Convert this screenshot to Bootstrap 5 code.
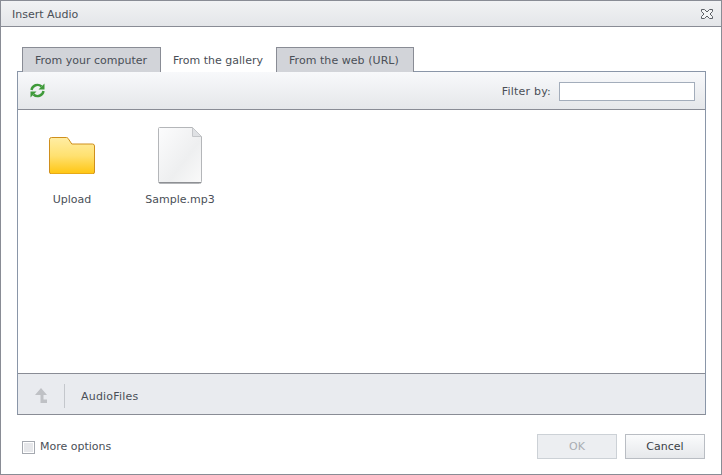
<!DOCTYPE html>
<html lang="en">
<head>
    <meta charset="UTF-8">
    <meta name="viewport" content="width=device-width, initial-scale=1.0">
    <title>Insert Audio</title>
    <link href="https://cdn.jsdelivr.net/npm/bootstrap@5.3.0/dist/css/bootstrap.min.css" rel="stylesheet">
    <style>
        html, body { height: 100%; }
        body { font-family: "DejaVu Sans", sans-serif; font-size: 11px; color: #4a4f57; background: #fff; }
        .dlg { width: 722px; height: 475px; border: 1px solid #898c95; }
        .dlg-title { height: 25px; padding: 0 8px 0 11px; color: #4a4f57; background: linear-gradient(#f1f2f4, #e4e6e9); border-bottom: 1px solid #898c95; box-sizing: content-box; }
        .title-lbl { margin-top: 3px; }
        .dlg-body { padding: 20px 16px 0 16px; }
        .tab-row { padding-left: 5px; height: 24px; position: relative; z-index: 1; }
        .tab-item { height: 25px; line-height: 26px; padding: 0 12px; background: #d2d4d9; color: #4a4f57; border: 1px solid #898c95; border-bottom: 0; }
        .tab-item.first { width: 139px; }
        .tab-item.second { width: 115px; background: #fff; border-width: 0; line-height: 28px; }
        .tab-item.third { width: 138px; letter-spacing: .05px; }
        .panel-box { width: 689px; height: 344px; border: 1px solid #8a96a8; border-bottom-color: #898c95; }
        .tool-bar { height: 38px; padding: 2px 10px 0 12px; background: linear-gradient(#f8f9fb, #e5e7ea); border-bottom: 1px solid #898c95; }
        .tool-bar > svg { margin-bottom: 2px; }
        .filter-lbl { letter-spacing: .2px; margin-top: 1px; }
        .filter-box { width: 136px; height: 19px; border: 1px solid #a3adbb; background: #fff; margin-left: 8px; }
        .file-area { padding-top: 17px; }
        .file-item { width: 108px; text-align: center; }
        .file-item .pic { height: 57px; }
        .file-item .cap { margin-top: 8px; }
        .path-bar { height: 41px; padding-top: 3px; background: #e9ebef; border-top: 1px solid #898c95; }
        .path-sep { width: 1px; height: 24px; background: #c4c7cc; margin: 0 16px 0 17px; }
        .path-lbl { letter-spacing: .2px; margin-top: 4px; }
        .up-icon { margin-left: 17px; }
        .dlg-foot { padding: 19px 16px 0 21px; }
        .foot-opts { margin-top: 1px; }
        .chk { width: 13px; height: 13px; border: 1px solid #a5a9b0; background: #e6e7ea; box-shadow: inset 0 0 0 1px #fff; margin-right: 5px; }
        .foot-btn { width: 80px; height: 25px; padding: 1px 0 0; font-size: 11px; border-radius: 0; color: #3a3f47; border: 1px solid #b9bdc3; background: linear-gradient(#fafbfc, #e6e8eb); }
        .foot-btn:disabled { color: #a9adb3; opacity: 1; border-color: #ccd1d6; background: #eceef1; }
    </style>
</head>
<body>
    <div class="dlg d-flex flex-column">
        <div class="dlg-title d-flex align-items-center justify-content-between">
            <span class="title-lbl">Insert Audio</span>
            <svg width="12" height="10" viewBox="0 0 12 10" fill="#f4f5f6" stroke="#5c6066" stroke-width="1"><path d="M.5 .5h3L6 3l2.500-2.500h3v2L9 5l2.500 2.500v2h-3L6 7 3.500 9.500h-3v-2L3 5 .5 2.500z"/></svg>
        </div>
        <div class="dlg-body">
            <div class="tab-row d-flex">
                <div class="tab-item first">From your computer</div>
                <div class="tab-item second">From the gallery</div>
                <div class="tab-item third">From the web (URL)</div>
            </div>
            <div class="panel-box d-flex flex-column">
                <div class="tool-bar d-flex align-items-center justify-content-between">
                    <svg width="15" height="15" viewBox="0 0 15 15" fill="none" stroke="#3f9a3a" stroke-width="2.400"><path d="M1.500 7a6 6 0 0 1 10-3.500"/><path d="M13.500 8a6 6 0 0 1-10 3.500"/><path d="M14.500 .5v6h-6z" fill="#3f9a3a" stroke="none"/><path d="M.5 14.500v-6h6z" fill="#3f9a3a" stroke="none"/></svg>
                    <div class="d-flex align-items-center">
                        <span class="filter-lbl">Filter by:</span>
                        <div class="filter-box"></div>
                    </div>
                </div>
                <div class="file-area flex-grow-1 d-flex">
                    <div class="file-item">
                        <div class="pic d-flex align-items-center justify-content-center">
                            <svg width="46" height="37" viewBox="0 0 46 37">
                                <defs><linearGradient id="fg" x1="0" y1="0" x2="0" y2="1"><stop offset="0" stop-color="#ffeda4"/><stop offset=".5" stop-color="#ffe170"/><stop offset="1" stop-color="#ffc510"/></linearGradient></defs>
                                <path d="M.5 2.500a2 2 0 0 1 2-2h15a2 2 0 0 1 1.500 .8l3.800 5.700h20.700a2 2 0 0 1 2 2v26a2 2 0 0 1-2 2h-41a2 2 0 0 1-2-2z" fill="url(#fg)" stroke="#cf8f1c"/>
                            </svg>
                        </div>
                        <div class="cap">Upload</div>
                    </div>
                    <div class="file-item">
                        <div class="pic d-flex align-items-center justify-content-center">
                            <svg width="44" height="57" viewBox="0 0 44 57">
                                <defs><linearGradient id="pg" x1="0" y1="0" x2="1" y2="1"><stop offset="0" stop-color="#fcfcfd"/><stop offset=".6" stop-color="#eeeff0"/><stop offset="1" stop-color="#fafafa"/></linearGradient></defs>
                                <path d="M.5 1.500a1 1 0 0 1 1-1h33l9 9v45a2 2 0 0 1-2 2h-40a2 2 0 0 1-1-2z" fill="url(#pg)" stroke="#b4b6b9"/>
                                <path d="M34.500 .5v9h9z" fill="#dfe1e4" stroke="#c4c6c9"/>
                                <path d="M1 55.500h42" stroke="#8e9094"/>
                            </svg>
                        </div>
                        <div class="cap">Sample.mp3</div>
                    </div>
                </div>
                <div class="path-bar d-flex align-items-center">
                    <svg class="up-icon" width="12" height="15" viewBox="0 0 12 15" fill="#bfc1c5"><path d="M6 0l6 7H8.500v4.500H12V15H5.500V7H0z"/></svg>
                    <div class="path-sep"></div>
                    <span class="path-lbl">AudioFiles</span>
                </div>
            </div>
        </div>
        <div class="dlg-foot d-flex align-items-center justify-content-between">
            <div class="foot-opts d-flex align-items-center">
                <div class="chk"></div>
                <span>More options</span>
            </div>
            <div class="d-flex gap-2">
                <button type="button" class="btn foot-btn" disabled>OK</button>
                <button type="button" class="btn foot-btn">Cancel</button>
            </div>
        </div>
    </div>
    <script src="https://cdn.jsdelivr.net/npm/bootstrap@5.3.0/dist/js/bootstrap.bundle.min.js"></script>
</body>
</html>
